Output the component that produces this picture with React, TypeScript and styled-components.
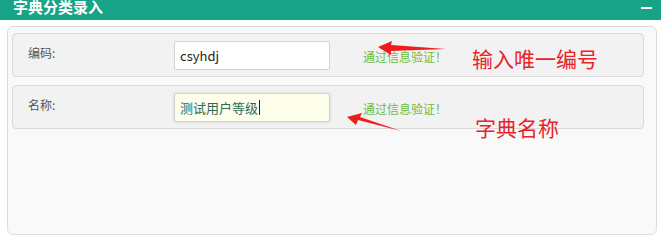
import React from "react";
import styled, { createGlobalStyle } from "styled-components";

const GlobalStyle = createGlobalStyle`
  html, body {
    margin: 0;
    padding: 0;
    background: #fff;
    font-family: "Liberation Sans", "Noto Sans CJK SC", sans-serif;
  }
`;

const rows = [
  { label: "编码:", value: "csyhdj", filled: false, note: "输入唯一编号" },
  { label: "名称:", value: "测试用户等级", filled: true, note: "字典名称" },
];

function App() {
  return (
    <Page>
      <GlobalStyle />
      <Header>
        <h2>字典分类录入</h2>
        <Minimize />
      </Header>
      <Body>
        <Panel>
          {rows.map((row, index) => (
            <FormRow key={index}>
              <Label>{row.label}</Label>
              <Field $filled={row.filled}>
                {row.value}
                {row.filled && <Caret />}
              </Field>
              <Valid>通过信息验证！</Valid>
              <Note $second={index === 1}>{row.note}</Note>
            </FormRow>
          ))}
        </Panel>
        <Arrows width="661" height="250" viewBox="0 0 661 250">
          <polygon points="378,47 392,41 391,45 446,49 391,51 391,55" fill="#ee1c1c" />
          <polygon points="347,117 362,113 360,117 401,131 358,120 356,125" fill="#ee1c1c" />
        </Arrows>
      </Body>
    </Page>
  );
}

const Page = styled.div`
  width: 661px;
  height: 250px;
  display: flex;
  flex-direction: column;
  position: relative;
`;

const Header = styled.div`
  height: 20px;
  background: #17a386;
  display: flex;
  align-items: flex-start;
  justify-content: space-between;
  padding: 0 9px 0 13px;

  h2 {
    margin: -2px 0 0;
    color: #fff;
    font-size: 15px;
    font-weight: 700;
    line-height: 17px;
    font-family: "Noto Sans CJK SC", sans-serif;
  }
`;

const Minimize = styled.span`
  width: 11px;
  height: 2px;
  background: #fff;
  margin-top: 7px;
`;

const Body = styled.div`
  padding: 6px 4px 15px 7px;
  flex: 1;
`;

const Panel = styled.div`
  height: 100%;
  box-sizing: border-box;
  border: 1px solid #dcdcdc;
  border-radius: 6px;
  background: #f9f9f9;
  padding: 6px 12px 0 4px;
  display: flex;
  flex-direction: column;
  gap: 8px;
`;

const FormRow = styled.div`
  height: 44px;
  box-sizing: border-box;
  border: 1px solid #dadada;
  border-radius: 4px;
  background: #f2f2f2;
  display: flex;
  align-items: center;
  position: relative;
`;

const Label = styled.span`
  width: 161px;
  padding-left: 15px;
  box-sizing: border-box;
  font-size: 12px;
  color: #555;
  align-self: flex-start;
  margin-top: 10px;
  font-family: "Noto Sans CJK SC", sans-serif;
`;

const Field = styled.div<{ $filled: boolean }>`
  width: 156px;
  height: 29px;
  box-sizing: border-box;
  border: 1px solid #d2d2d2;
  border-radius: 2px;
  background: ${(p) => (p.$filled ? "#fdfdec" : "#fff")};
  color: ${(p) => (p.$filled ? "#2f6a55" : "#222")};
  font-size: 13px;
  display: flex;
  align-items: center;
  padding-left: 5px;
  font-family: "Noto Sans CJK SC", sans-serif;
  box-shadow: ${(p) => (p.$filled ? "0 0 3px rgba(0,0,0,0.15)" : "none")};
`;

const Caret = styled.span`
  width: 1px;
  height: 15px;
  background: #222;
  margin-left: 1px;
`;

const Valid = styled.span`
  margin-left: 33px;
  font-size: 12px;
  color: #6dbb3c;
  font-family: "Noto Sans CJK SC", sans-serif;
  margin-top: 2px;
`;

const Note = styled.span<{ $second: boolean }>`
  position: absolute;
  left: ${(p) => (p.$second ? "462px" : "459px")};
  top: ${(p) => (p.$second ? "28px" : "11px")};
  font-size: 21px;
  color: #e8242a;
  font-family: "Noto Sans CJK SC", sans-serif;
  line-height: 26px;
  white-space: nowrap;
`;

const Arrows = styled.svg`
  position: absolute;
  left: 0;
  top: 0;
  pointer-events: none;
`;

export default App;
